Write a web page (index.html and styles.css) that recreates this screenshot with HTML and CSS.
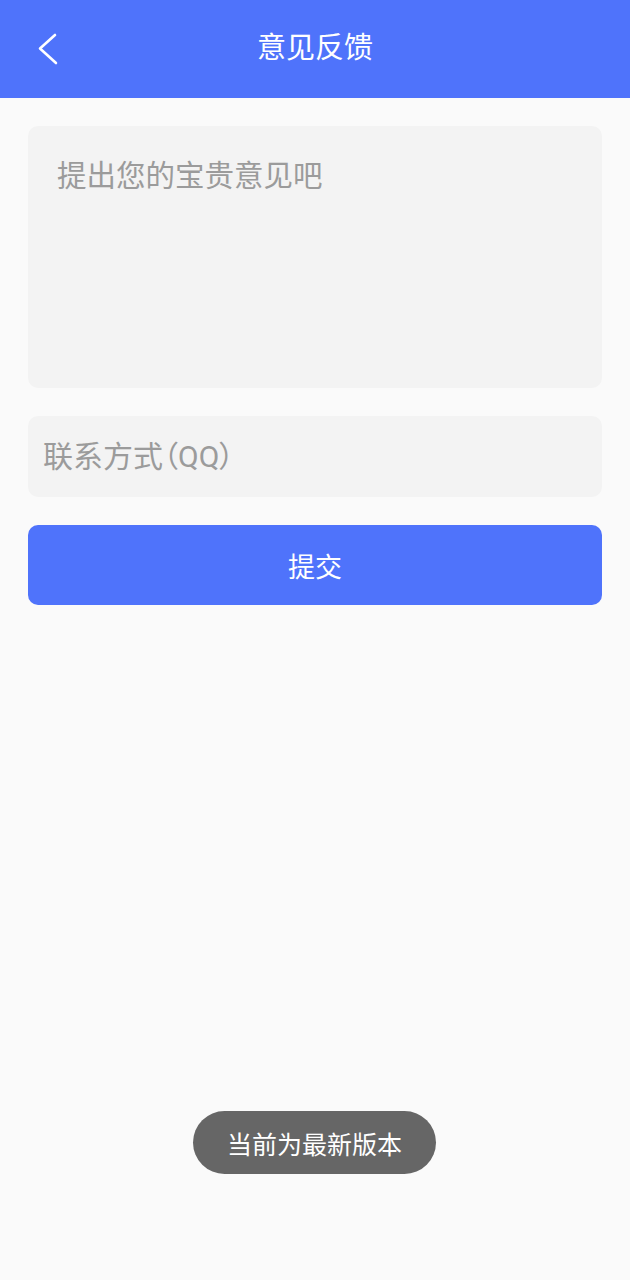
FILE: index.html
```html
<!DOCTYPE html>
<html lang="zh-CN">
<head>
<meta charset="utf-8">
<title>意见反馈</title>
<link rel="stylesheet" href="styles.css">
</head>
<body>
<header class="topbar">
  <button class="back" aria-label="返回">
    <svg width="24" height="32" viewBox="0 0 24 32"><polyline points="19,2 4,15.5 20,30" fill="none" stroke="#fff" stroke-width="2.6" stroke-linecap="round" stroke-linejoin="round"/></svg>
  </button>
  <h1 class="title">意见反馈</h1>
</header>
<main class="form">
  <textarea class="feedback" placeholder="提出您的宝贵意见吧"></textarea>
  <input class="contact" type="text" placeholder="联系方式（QQ）">
  <button class="submit">提交</button>
</main>
<div class="toast">当前为最新版本</div>
</body>
</html>
```
FILE: styles.css
```css
* { box-sizing: border-box; }
html, body {
  margin: 0;
  padding: 0;
  background: #fafafa;
  font-family: Roboto, "Noto Sans CJK SC", "Noto Sans", sans-serif;
}
body { min-height: 1280px; position: relative; }
.topbar {
  height: 98px;
  background: #4f73fb;
  display: flex;
  align-items: center;
  justify-content: center;
  position: relative;
}
.back {
  position: absolute;
  left: 36px;
  top: 33px;
  background: none;
  border: 0;
  padding: 0;
  width: 24px;
  height: 32px;
  display: block;
}
.back svg { display: block; }
.title {
  margin: 0;
  color: #fff;
  font-size: 29px;
  font-weight: 400;
  line-height: 1;
  position: relative;
  top: -1px;
}
.form {
  padding: 28px 28px 0;
  display: flex;
  flex-direction: column;
  gap: 28px;
}
.feedback, .contact {
  border: 0;
  outline: none;
  background: #f3f3f3;
  border-radius: 10px;
  font-family: inherit;
  color: #333;
  width: 100%;
}
.feedback {
  height: 262px;
  padding: 28.5px 29px;
  font-size: 29.5px;
  line-height: 42px;
  resize: none;
  display: block;
}
.contact {
  height: 81px;
  padding: 0 15px;
  font-size: 30px;
  font-feature-settings: "palt";
}
.feedback::placeholder, .contact::placeholder { color: #9b9b9b; }
.submit {
  height: 80px;
  border: 0;
  border-radius: 10px;
  background: #4f73fb;
  color: #fff;
  font-family: inherit;
  font-size: 27px;
  width: 100%;
}
.toast {
  position: absolute;
  top: 1111px;
  left: 193px;
  width: 243px;
  height: 63px;
  border-radius: 32px;
  background: #666666;
  color: #fff;
  font-size: 25px;
  display: flex;
  align-items: center;
  justify-content: center;
}
```
